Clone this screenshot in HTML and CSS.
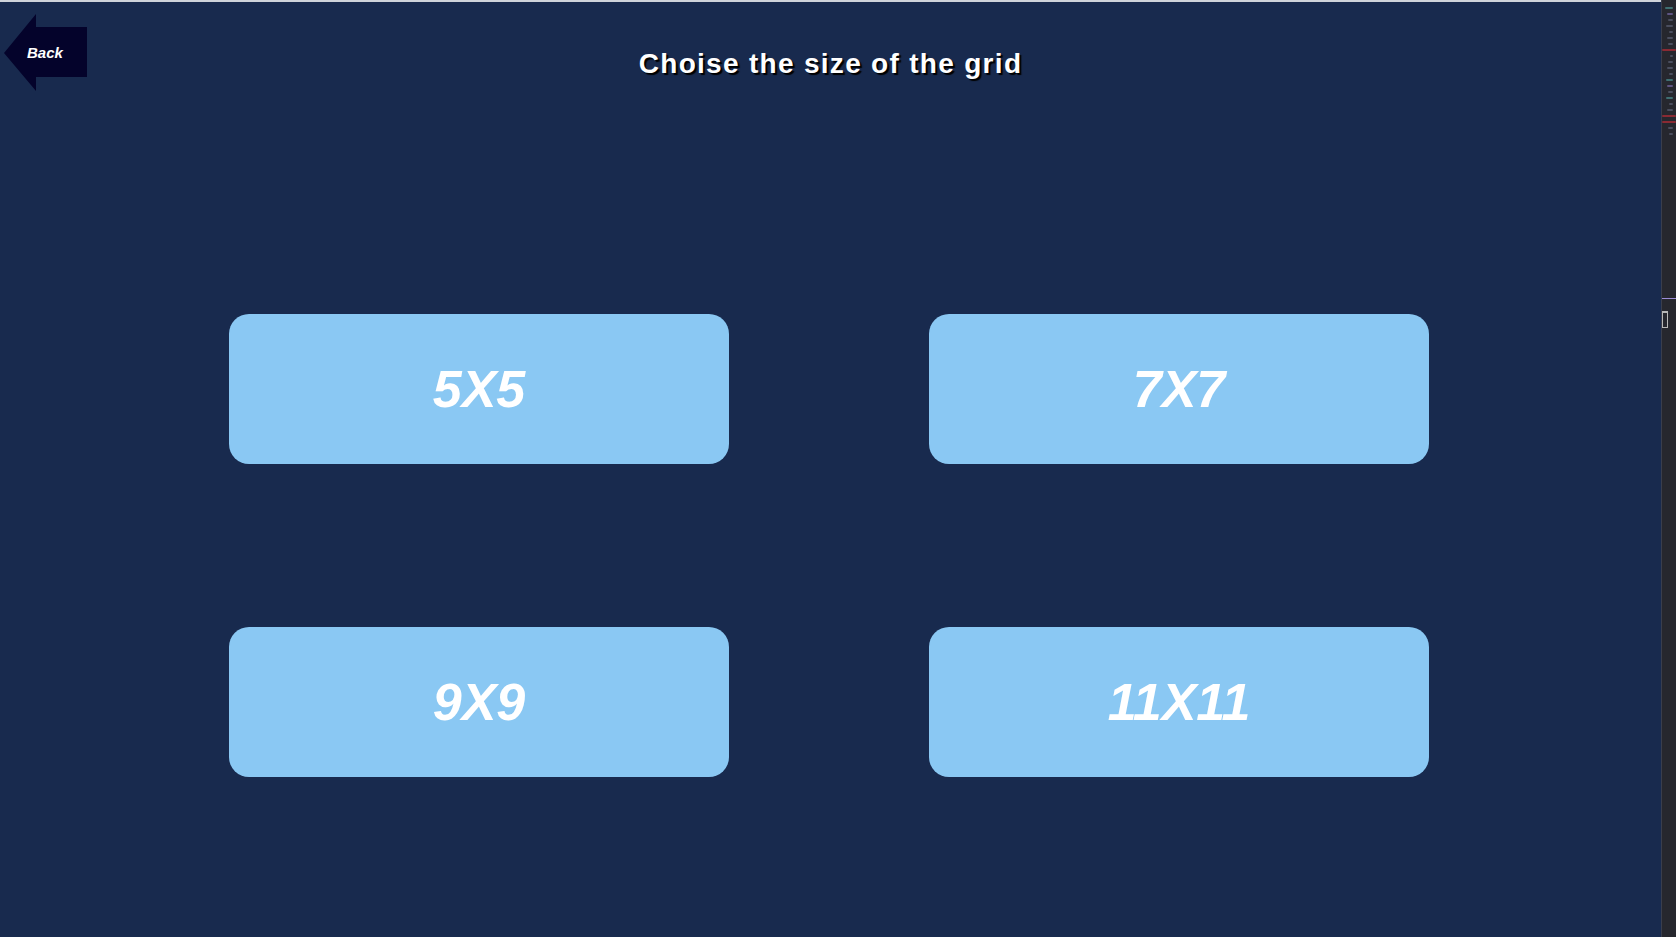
FILE: index.html
```html
<!DOCTYPE html>
<html lang="en">
<head>
<meta charset="utf-8">
<title>Choose grid size</title>
<link rel="stylesheet" href="styles.css">
</head>
<body>
<div class="app">
  <header class="header">
    <a class="back" href="#">
      <svg class="back-arrow" width="88" height="92" viewBox="0 0 88 92" aria-hidden="true">
        <polygon points="4,51 36,12 36,25 87,25 87,75 36,75 36,89" fill="#04032b"/>
      </svg>
      <span class="back-label">Back</span>
    </a>
    <h1 class="title">Choise the size of the grid</h1>
    <div class="spacer"></div>
  </header>
  <main class="grid">
    <button class="size-btn">5X5</button>
    <button class="size-btn">7X7</button>
    <button class="size-btn">9X9</button>
    <button class="size-btn">11X11</button>
  </main>
</div>
<aside class="side">
  <div class="mini">
    <span class="ln w8 c1"></span>
    <span class="ln w6 c2"></span>
    <span class="ln w5 c3"></span>
    <span class="ln w7 c3"></span>
    <span class="ln w4 c3"></span>
    <span class="ln w6 c3"></span>
    <span class="ln w5 c3"></span>
    <span class="ln w8 red"></span>
    <span class="ln w3 c3"></span>
    <span class="ln w5 c3"></span>
    <span class="ln w6 c3"></span>
    <span class="ln w4 c3"></span>
    <span class="ln w7 c1"></span>
    <span class="ln w6 c2"></span>
    <span class="ln w5 c3"></span>
    <span class="ln w7 c1"></span>
    <span class="ln w4 c3"></span>
    <span class="ln w6 c3"></span>
    <span class="ln w8 red"></span>
    <span class="ln w8 red"></span>
    <span class="ln w5 c3"></span>
    <span class="ln w4 c3"></span>
  </div>
  <div class="divider"></div>
  <div class="trash"></div>
</aside>
</body>
</html>
```
FILE: styles.css
```css
* { box-sizing: border-box; }

html, body {
  margin: 0;
  padding: 0;
  height: 100%;
}

body {
  display: flex;
  width: 1676px;
  height: 937px;
  overflow: hidden;
  background: #182a4e;
  font-family: "Liberation Sans", Arial, sans-serif;
}

.app {
  width: 1661px;
  height: 937px;
  background: #182a4e;
  border-top: 2px solid #cfd3da;
  display: flex;
  flex-direction: column;
}

.header {
  display: grid;
  grid-template-columns: 1fr auto 1fr;
  align-items: start;
  height: 92px;
}

.back {
  position: relative;
  display: block;
  width: 88px;
  height: 92px;
  text-decoration: none;
}

.back-arrow {
  display: block;
}

.back-label {
  position: absolute;
  left: 27px;
  top: 42px;
  color: #ffffff;
  font-weight: bold;
  font-style: italic;
  font-size: 15px;
  line-height: 18px;
}

.title {
  margin: 0;
  padding-top: 46px;
  color: #ffffff;
  font-size: 28px;
  line-height: 32px;
  font-weight: bold;
  letter-spacing: 1.3px;
  text-shadow: 2px 2px 1px #000000;
  white-space: nowrap;
}

.grid {
  display: grid;
  grid-template-columns: 500px 500px;
  grid-auto-rows: 150px;
  column-gap: 200px;
  row-gap: 163px;
  justify-content: start;
  padding-left: 229px;
  margin-top: 220px;
}

.size-btn {
  border: none;
  margin: 0;
  padding: 0;
  background: #8ac8f3;
  border-radius: 20px;
  color: #ffffff;
  font-family: "Liberation Sans", Arial, sans-serif;
  font-size: 52px;
  font-weight: bold;
  font-style: italic;
  display: flex;
  align-items: center;
  justify-content: center;
  cursor: pointer;
}

.side {
  width: 15px;
  height: 937px;
  background: #26272e;
  border-left: 1px solid #3a3e4c;
  display: flex;
  flex-direction: column;
}

.mini {
  display: flex;
  flex-direction: column;
  gap: 4px;
  padding: 7px 0 0 2px;
  height: 296px;
}

.ln {
  display: block;
  height: 2px;
  border-radius: 1px;
}
.w3 { width: 3px; margin-left: 6px; }
.w4 { width: 4px; margin-left: 5px; }
.w5 { width: 5px; margin-left: 4px; }
.w6 { width: 6px; margin-left: 3px; }
.w7 { width: 7px; margin-left: 2px; }
.w8 { width: 8px; margin-left: 1px; }
.c1 { background: #3f6f72; }
.c2 { background: #5e5582; }
.c3 { background: #4a4e5e; }
.red { background: #8a2a33; width: 14px; margin-left: -2px; }

.divider {
  height: 1px;
  background: #9b8cd6;
  margin-top: 2px;
}

.trash {
  width: 6px;
  height: 17px;
  margin-top: 12px;
  border: 1px solid #b8b8b8;
  border-top-width: 2px;
}
```
